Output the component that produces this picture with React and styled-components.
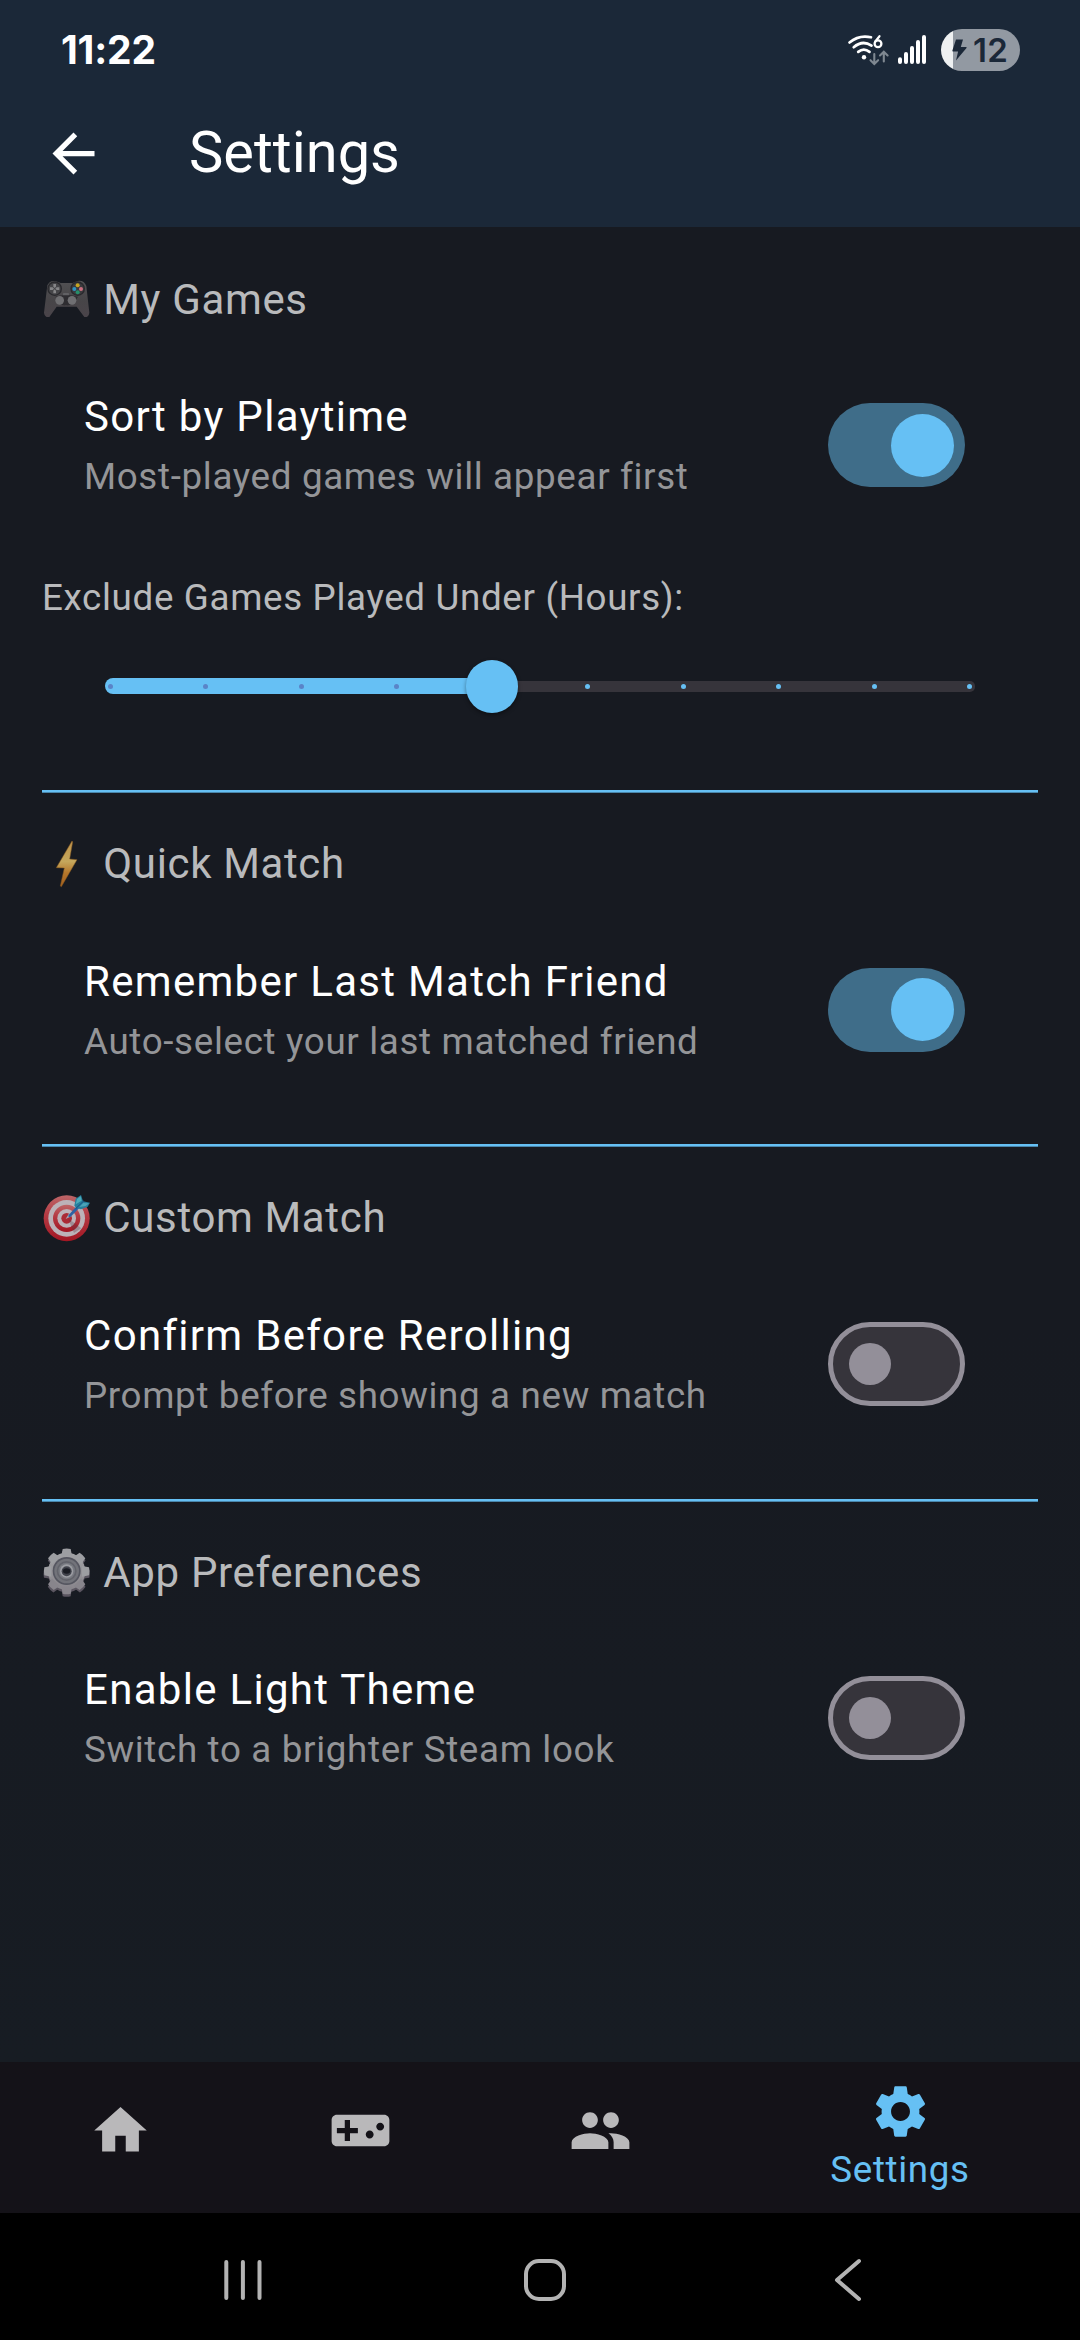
import React from "react";
import styled, { createGlobalStyle } from "styled-components";
import { MdArrowBack, MdPeople, MdSettings } from "react-icons/md";

const accent = "#66c0f4";

const GlobalStyle = createGlobalStyle`
  * { box-sizing: border-box; }
  html, body { margin: 0; padding: 0; background: #000; }
  body { font-family: Roboto, "Noto Sans", sans-serif; }
  svg { display: block; flex: none; }
`;

const Screen = styled.div`
  display: flex;
  flex-direction: column;
  width: 1080px;
  height: 2340px;
  overflow: hidden;
`;

const Header = styled.header`
  display: flex;
  flex-direction: column;
  flex: none;
  height: 227px;
  background: #1b2838;
  color: #fff;
`;

const StatusBar = styled.div`
  display: flex;
  align-items: center;
  height: 80px;
  padding: 20px 60px 0 61px;
  justify-content: space-between;
`;

const Clock = styled.span`
  font: 700 39px/60px Inter, Roboto, sans-serif;
  letter-spacing: -0.2px;
`;

const StatusIcons = styled.div`
  display: flex;
  align-items: center;
`;

const Battery = styled.div`
  display: flex;
  align-items: center;
  width: 79px;
  height: 42px;
  margin-left: 14px;
  padding-left: 11px;
  border-radius: 21px;
  background: linear-gradient(90deg, #eef0f1 12px, #9299a2 12px);
  color: #1b2838;
`;

const BatteryLevel = styled.span`
  margin-left: 6px;
  font: 600 33px/42px Inter, Roboto, sans-serif;
  letter-spacing: 0.4px;
`;

const AppBar = styled.div`
  display: flex;
  align-items: center;
  height: 147px;
  padding-left: 42px;
`;

const Title = styled.h1`
  margin: 0 0 3px 84px;
  font-size: 57.75px;
  font-weight: 400;
  line-height: 74px;
`;

const Content = styled.main`
  flex: none;
  height: 1835px;
  padding: 42.3px 42px 0;
  background: linear-gradient(#171a21, #171a21 60%, #171c23);
`;

const Section = styled.section`
  padding-bottom: ${(p) => p.$end}px;
`;

const Heading = styled.h2`
  display: flex;
  align-items: center;
  gap: 11.3px;
  height: 60px;
  margin: 0;
  font-size: 42px;
  font-weight: 400;
  letter-spacing: 0.65px;
  color: #b9babc;
`;

const Row = styled.div`
  display: flex;
  align-items: center;
  justify-content: space-between;
  height: 120px;
  margin-top: 58px;
  padding: 0 73.5px 0 42px;
`;

const RowTitle = styled.div`
  font-size: 42px;
  line-height: 60px;
  letter-spacing: 1.3px;
  color: #fff;
`;

const RowNote = styled.div`
  font-size: 36.75px;
  line-height: 60px;
  letter-spacing: 0.66px;
  color: #949598;
`;

const Switch = styled.div`
  display: flex;
  align-items: center;
  justify-content: ${(p) => (p.$on ? "flex-end" : "flex-start")};
  width: 136.5px;
  height: 84px;
  margin-bottom: 4px;
  padding: ${(p) => (p.$on ? "0 10.5px" : "0 15.75px")};
  border-radius: 42px;
  border: ${(p) => (p.$on ? "0" : "5.25px solid #938f99")};
  background: ${(p) => (p.$on ? "#3f6d89" : "#36343b")};
`;

const Knob = styled.div`
  width: ${(p) => (p.$on ? 63 : 42)}px;
  height: ${(p) => (p.$on ? 63 : 42)}px;
  border-radius: 50%;
  background: ${(p) => (p.$on ? accent : "#938f99")};
`;

const SliderLabel = styled.div`
  margin-top: 61px;
  font-size: 36.75px;
  line-height: 60px;
  letter-spacing: 0.66px;
  color: #b9babc;
`;

const Slider = styled.div`
  position: relative;
  display: flex;
  align-items: center;
  height: 63px;
  margin: 26.6px 63px 0;
`;

const ActiveTrack = styled.div`
  width: 387px;
  height: 16px;
  border-radius: 8px 0 0 8px;
  background: ${accent};
`;

const RestTrack = styled.div`
  flex: 1;
  height: 10.5px;
  border-radius: 0 5px 5px 0;
  background: #36343b;
`;

const Ticks = styled.div`
  position: absolute;
  inset: 0 2.6px;
  display: flex;
  align-items: center;
  justify-content: space-between;
`;

const Tick = styled.i`
  width: 5.25px;
  height: 5.25px;
  border-radius: 50%;
  background: ${(p) => (p.$covered ? "#5a84c8" : accent)};
`;

const Thumb = styled.div`
  position: absolute;
  left: 360.7px;
  top: 5.2px;
  width: 52.5px;
  height: 52.5px;
  border-radius: 50%;
  background: ${accent};
  box-shadow: 0 2px 4px rgba(0, 0, 0, 0.4);
`;

const Divider = styled.hr`
  height: 3px;
  margin: 0 0 40.6px;
  border: 0;
  background: linear-gradient(${accent} 2px, #4a86ab 2px);
`;

const TabBar = styled.nav`
  display: grid;
  grid-template-columns: 240px 240px 240px 360px;
  flex: none;
  height: 151px;
  background: #141218;
`;

const Tab = styled.div`
  display: flex;
  flex-direction: column;
  align-items: center;
  padding-top: ${(p) => (p.$active ? 18 : 37)}px;
  color: ${(p) => (p.$active ? accent : "#b9b8ba")};
  font-size: 36.75px;
  line-height: 54px;
  letter-spacing: 0.66px;
`;

const SystemBar = styled.footer`
  display: flex;
  align-items: center;
  flex: 1;
  padding: 6px 216px 0 222px;
  background: #000;
`;

const RecentsIcon = styled.svg`
  margin-right: 258px;
`;

const BackIcon = styled.svg`
  margin-left: 264px;
`;

function StatusSignals() {
  return (
    <svg width="82" height="42" viewBox="845 29 82 42" fill="none" stroke="#fff" strokeLinecap="round">
      <g strokeWidth="2.7">
        <path d="M849.5 42.5 Q859 34.5 871 37.3" />
        <path d="M853.7 47.2 Q862.5 39.7 871.5 45.6" />
        <path d="M858.2 51.9 Q863.8 47.3 869.5 51.9" />
      </g>
      <circle cx="864" cy="57.2" r="2.2" fill="#fff" stroke="none" />
      <path d="M879.5 36.2 L875.3 41.5" strokeWidth="2.2" />
      <circle cx="878" cy="43.8" r="3.4" strokeWidth="2.3" />
      <g stroke="#7f8891" strokeWidth="2.1">
        <path d="M874.3 54V63.5M870.5 60.2L874.3 64L878.1 60.2" />
        <path d="M883.8 61.5V52.5M880 55.5L883.8 51.7L887.6 55.5" />
      </g>
      <g strokeWidth="4">
        <path d="M900 59.3V62M906 54V62M912 48V62M918 42V62M924 37V62" />
      </g>
    </svg>
  );
}

function GamepadEmoji() {
  return (
    <svg width="50" height="50" viewBox="36 44 150 150">
      <defs>
        <linearGradient id="padBody" x1="0" y1="0" x2="0" y2="1">
          <stop offset="0" stopColor="#515153" />
          <stop offset="0.55" stopColor="#474548" />
          <stop offset="1" stopColor="#4a444a" />
        </linearGradient>
      </defs>
      <path d="M52 78 Q60 62 78 66 L92 71 H128 L143 65 Q162 62 169 80 L178 160 Q176 175 163 173 L140 142 H80 L58 173 Q44 175 42 160Z" fill="url(#padBody)" />
      <path d="M76 112 Q88 142 108 138 Q128 142 144 112 Q126 106 110 107 Q92 106 76 112Z" fill="#2e2d31" />
      <circle cx="74" cy="88" r="22" fill="#29292d" />
      <circle cx="74" cy="88" r="18" fill="#454548" />
      <circle cx="143" cy="88" r="22" fill="#29292d" />
      <circle cx="143" cy="88" r="18" fill="#3b3b3e" />
      <g fill="#858587">
        <path d="M70 74h8v8l-4 4-4-4zM70 102h8v-8l-4-4-4 4zM60 84h8l4 4-4 4h-8zM88 84h-8l-4 4 4 4h8z" />
      </g>
      <circle cx="143" cy="78" r="6" fill="#c6a523" />
      <circle cx="133" cy="89" r="6" fill="#2c93c4" />
      <circle cx="153" cy="89" r="6" fill="#cd6f80" />
      <circle cx="143" cy="99" r="6" fill="#278f6b" />
      <rect x="99" y="101" width="18" height="7" rx="2" fill="#616164" />
      <circle cx="89" cy="123" r="13" fill="#6f6f72" />
      <circle cx="126" cy="123" r="13" fill="#6f6f72" />
    </svg>
  );
}

function BoltEmoji() {
  return (
    <svg width="50" height="50" viewBox="36 57 150 150">
      <defs>
        <linearGradient id="boltFill" x1="0" y1="0" x2="0" y2="1">
          <stop offset="0" stopColor="#bd924b" />
          <stop offset="0.45" stopColor="#c5a75c" />
          <stop offset="0.7" stopColor="#b5772b" />
          <stop offset="1" stopColor="#a35f1e" />
        </linearGradient>
      </defs>
      <path d="M126 63 L128 66 L119 117 L141 119 L94 200 L91 198 L103 144 L79 143Z" fill="url(#boltFill)" stroke="#87591f" strokeWidth="1.5" strokeLinejoin="round" />
    </svg>
  );
}

function TargetEmoji() {
  return (
    <svg width="50" height="50" viewBox="36 38 150 150">
      <defs>
        <linearGradient id="ringRed" x1="0" y1="0" x2="0" y2="1">
          <stop offset="0" stopColor="#bd6668" />
          <stop offset="0.4" stopColor="#b53c45" />
          <stop offset="1" stopColor="#a31623" />
        </linearGradient>
      </defs>
      <circle cx="110" cy="114" r="69" fill="url(#ringRed)" />
      <circle cx="110" cy="114" r="55" fill="#bcb2b8" />
      <circle cx="110" cy="114" r="41" fill="url(#ringRed)" />
      <circle cx="110" cy="114" r="28" fill="#bcb2b8" />
      <circle cx="110" cy="114" r="16" fill="#ab2a35" />
      <path d="M114 114L132 158L154 144Z" fill="#593442" opacity="0.3" />
      <path d="M107 116L118 98L126 107Z" fill="#a8a9b4" />
      <path d="M116 104L144 73L151 80L121 110Q113 111 116 104Z" fill="#2d62a3" />
      <path d="M133 76L137 55L153 44L159 63L180 67L173 79L153 87L139 83Z" fill="#267f9d" />
      <path d="M137 72L141 56L152 48L155 61Z" fill="#4dabb9" />
      <path d="M148 80L160 68L177 69L167 77Z" fill="#4ba3b8" />
      <path d="M137 85L162 61" stroke="#194c82" strokeWidth="3" />
    </svg>
  );
}

function GearEmoji() {
  const teeth = [0, 45, 90, 135, 180, 225, 270, 315];
  return (
    <svg width="50" height="50" viewBox="36 53 150 150">
      <defs>
        <linearGradient id="gearFill" x1="0" y1="57" x2="0" y2="198" gradientUnits="userSpaceOnUse">
          <stop offset="0" stopColor="#a4a5a8" />
          <stop offset="1" stopColor="#858188" />
        </linearGradient>
      </defs>
      <g fill="#5b5661" transform="translate(0 6)">
        <circle cx="110" cy="127" r="56" />
        {teeth.map((a) => <path key={a} d="M95 80L98 59Q110 56 122 59L125 80Z" transform={`rotate(${a} 110 127)`} />)}
      </g>
      <g>
        <circle cx="110" cy="126" r="56" fill="url(#gearFill)" />
        {teeth.map((a) => <path key={a} d="M94 80L98 59Q110 56 122 59L126 80Z" fill={a > 90 && a < 270 ? "#88858c" : "#9d9ea2"} transform={`rotate(${a} 110 126)`} />)}
      </g>
      <circle cx="110" cy="125" r="42" fill="#555660" />
      <circle cx="110" cy="125" r="37" fill="#72737a" />
      <circle cx="110" cy="125" r="30" fill="#62636b" />
      <circle cx="110" cy="125" r="25" fill="#777980" />
      <circle cx="110" cy="125" r="20" fill="#9c9da3" />
      <circle cx="110" cy="126" r="15" fill="#41434c" />
      <ellipse cx="110" cy="125" rx="11" ry="8" fill="#191b23" />
    </svg>
  );
}

function ToggleRow({ title, note, on }) {
  return (
    <Row>
      <div>
        <RowTitle>{title}</RowTitle>
        <RowNote>{note}</RowNote>
      </div>
      <Switch $on={on}><Knob $on={on} /></Switch>
    </Row>
  );
}

export default function App() {
  return (
    <Screen>
      <GlobalStyle />
      <Header>
        <StatusBar>
          <Clock>11:22</Clock>
          <StatusIcons>
            <StatusSignals />
            <Battery>
              <svg width="15" height="22" viewBox="0 0 15 22">
                <path d="M4 0.6H11L8.8 8H14.2Q15 8.4 14.5 9L4 21.5L6.1 12.6H1Q0.2 12.4 0.4 11.6Z" fill="#1b2838" />
              </svg>
              <BatteryLevel>12</BatteryLevel>
            </Battery>
          </StatusIcons>
        </StatusBar>
        <AppBar>
          <MdArrowBack size={63} />
          <Title>Settings</Title>
        </AppBar>
      </Header>

      <Content>
        <Section $end={72.1}>
          <Heading><GamepadEmoji />My Games</Heading>
          <ToggleRow title="Sort by Playtime" note="Most-played games will appear first" on />
          <SliderLabel>Exclude Games Played Under (Hours):</SliderLabel>
          <Slider>
            <ActiveTrack />
            <RestTrack />
            <Ticks>
              {Array.from({ length: 10 }, (_, i) => <Tick key={i} $covered={i < 4} />)}
            </Ticks>
            <Thumb />
          </Slider>
        </Section>
        <Divider />
        <Section $end={72.8}>
          <Heading><BoltEmoji />Quick Match</Heading>
          <ToggleRow title="Remember Last Match Friend" note="Auto-select your last matched friend" on />
        </Section>
        <Divider />
        <Section $end={72.8}>
          <Heading><TargetEmoji />Custom Match</Heading>
          <ToggleRow title="Confirm Before Rerolling" note="Prompt before showing a new match" />
        </Section>
        <Divider />
        <Section $end={0}>
          <Heading><GearEmoji />App Preferences</Heading>
          <ToggleRow title="Enable Light Theme" note="Switch to a brighter Steam look" />
        </Section>
      </Content>

      <TabBar>
        <Tab>
          <svg width="63" height="63" viewBox="0 0 24 24" fill="currentColor">
            <path d="M10 20v-6h4v6h5v-8h3L12 3 2 12h3v8z" />
          </svg>
        </Tab>
        <Tab>
          <svg width="63" height="63" viewBox="0 0 24 24" fill="currentColor">
            <path d="M21 6H3c-1.1 0-2 .9-2 2v8c0 1.1.9 2 2 2h18c1.1 0 2-.9 2-2V8c0-1.1-.9-2-2-2zm-10 7H8v3H6v-3H3v-2h3V8h2v3h3v2zm4.5 2c-.83 0-1.5-.67-1.5-1.5s.67-1.5 1.5-1.5 1.5.67 1.5 1.5-.67 1.5-1.5 1.5zm4-3c-.83 0-1.5-.67-1.5-1.5S18.67 9 19.5 9s1.5.67 1.5 1.5-.67 1.5-1.5 1.5z" />
          </svg>
        </Tab>
        <Tab><MdPeople size={63} /></Tab>
        <Tab $active>
          <MdSettings size={63} />
          <span>Settings</span>
        </Tab>
      </TabBar>

      <SystemBar>
        <RecentsIcon width="42" height="46" viewBox="0 0 42 46" stroke="#b3b3b3" strokeWidth="4" strokeLinecap="round">
          <path d="M4.3 5V41M20.9 5V41M37.5 5V41" />
        </RecentsIcon>
        <svg width="46" height="46" viewBox="0 0 46 46" fill="none" stroke="#b3b3b3" strokeWidth="4">
          <rect x="4" y="4" width="38" height="38" rx="13" />
        </svg>
        <BackIcon width="32" height="46" viewBox="0 0 32 46" fill="none" stroke="#b3b3b3" strokeWidth="4" strokeLinecap="round" strokeLinejoin="round">
          <path d="M27 4L5 23L27 42" />
        </BackIcon>
      </SystemBar>
    </Screen>
  );
}
